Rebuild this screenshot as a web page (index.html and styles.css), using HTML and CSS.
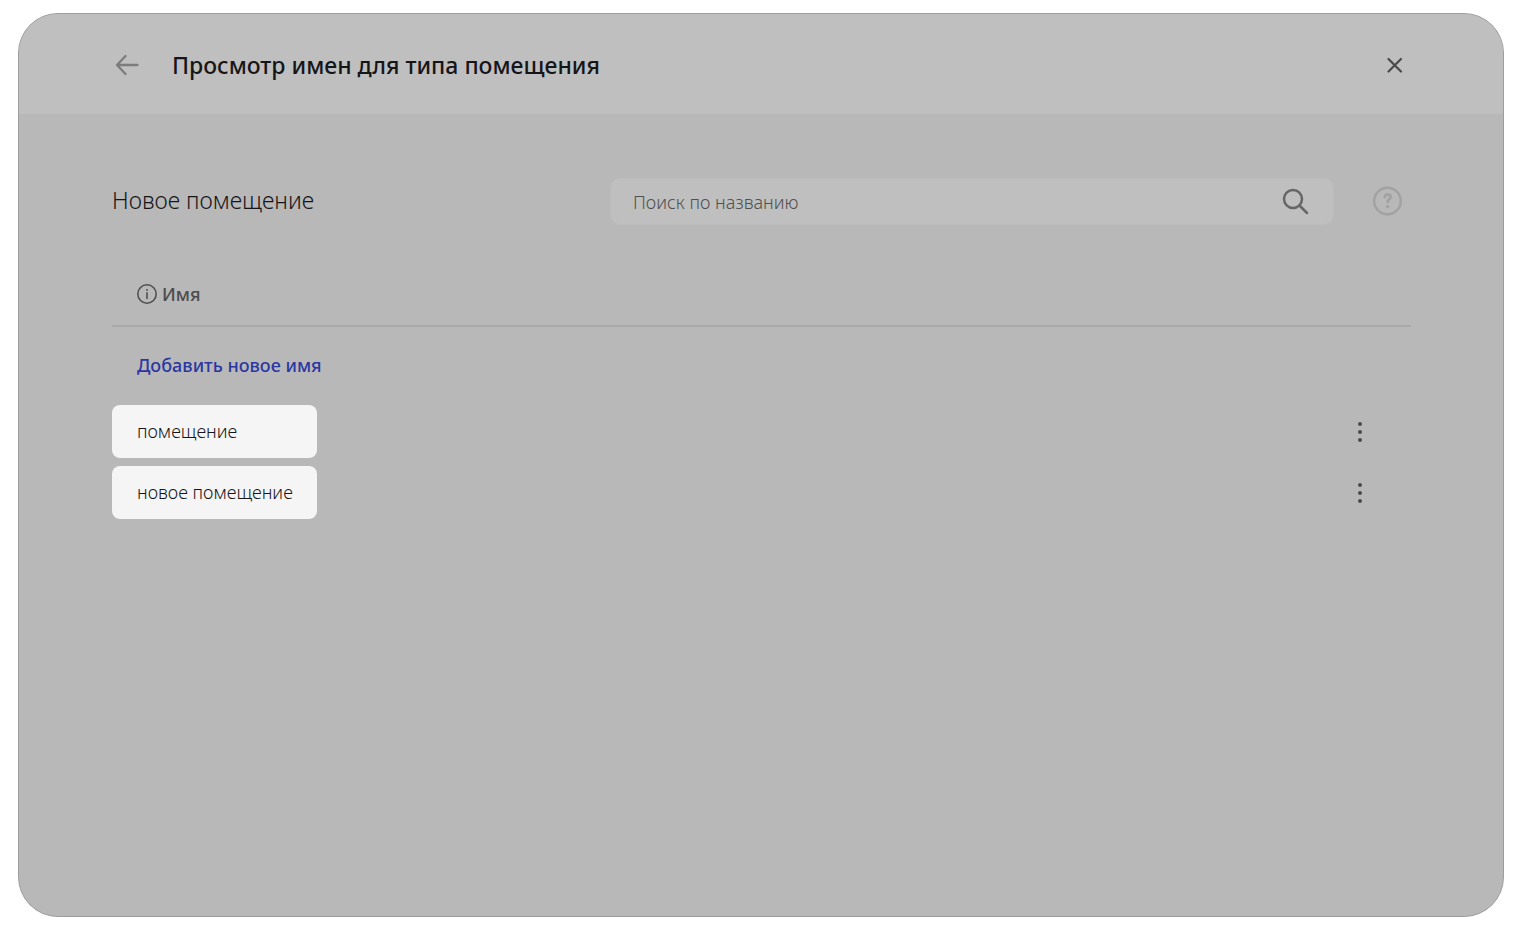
FILE: index.html
```html
<!DOCTYPE html>
<html lang="ru">
<head>
<meta charset="utf-8">
<meta name="viewport" content="width=device-width, initial-scale=1">
<title>Просмотр имен для типа помещения</title>
<link rel="stylesheet" href="styles.css">
</head>
<body>
<main class="panel">
  <header class="panel-header">
    <button class="icon-button" type="button" aria-label="Назад">
      <svg width="28" height="28" viewBox="0 0 28 28" fill="none" stroke="#7c7c7c" stroke-width="2.300" stroke-linecap="round" stroke-linejoin="round"><path d="M25.500 14H5M13.500 5L5 14l8.500 9"/></svg>
    </button>
    <h1 class="title">Просмотр имен для типа помещения</h1>
    <button class="icon-button" type="button" aria-label="Закрыть">
      <svg width="28" height="28" viewBox="0 0 28 28" fill="none" stroke="#4a4a4c" stroke-width="2.200" stroke-linecap="round"><path d="M7.500 8l12.500 12.500M20 8L7.500 20.500"/></svg>
    </button>
  </header>
  <section class="content">
    <div class="toolbar">
      <h2 class="subtitle">Новое помещение</h2>
      <form class="search">
        <input class="search-input" type="text" aria-label="Поиск по названию" placeholder="Поиск по названию">
        <button class="icon-button" type="button" aria-label="Найти">
          <svg width="28" height="28" viewBox="0 0 28 28" fill="none" stroke="#666" stroke-width="2.500" stroke-linecap="round"><circle cx="12" cy="11" r="9"/><path d="M18.500 17.500L26 25"/></svg>
        </button>
      </form>
      <button class="icon-button help" type="button" aria-label="Справка">
        <svg width="30" height="30" viewBox="0 0 30 30" fill="none" stroke="#a2a2a2" stroke-width="2.500" stroke-linecap="round" stroke-linejoin="round"><circle cx="14.500" cy="15" r="13.300"/><path stroke-width="2.800" d="M11.800 11.200c.2-1.900 1.400-2.700 2.900-2.700 1.700 0 2.900 1 2.900 2.500 0 2.400-2.900 2.300-2.900 5"/><circle cx="14.700" cy="20.600" r="1.700" fill="#a2a2a2" stroke="none"/></svg>
      </button>
    </div>
    <table class="names">
      <thead>
        <tr>
          <th class="head-cell" colspan="2" scope="col">
            <span class="head-label">
              <svg width="20" height="20" viewBox="0 0 20 20" fill="none" stroke="#505050" stroke-width="1.600"><circle cx="10" cy="10" r="9.200"/><path d="M10 8.300V15M10 5v1.800"/></svg>
              Имя
            </span>
          </th>
        </tr>
      </thead>
      <tbody>
        <tr>
          <td class="add-cell" colspan="2"><button class="add-button" type="button">Добавить новое имя</button></td>
        </tr>
        <tr>
          <td class="name-cell"><span class="name">помещение</span></td>
          <td class="menu-cell">
            <button class="icon-button" type="button" aria-label="Действия: помещение">
              <svg width="20" height="20" viewBox="0 0 20 20" fill="#4b4b4b"><circle cx="10" cy="2" r="2"/><circle cx="10" cy="10" r="2"/><circle cx="10" cy="18" r="2"/></svg>
            </button>
          </td>
        </tr>
        <tr>
          <td class="name-cell"><span class="name">новое помещение</span></td>
          <td class="menu-cell">
            <button class="icon-button" type="button" aria-label="Действия: новое помещение">
              <svg width="20" height="20" viewBox="0 0 20 20" fill="#4b4b4b"><circle cx="10" cy="2" r="2"/><circle cx="10" cy="10" r="2"/><circle cx="10" cy="18" r="2"/></svg>
            </button>
          </td>
        </tr>
      </tbody>
    </table>
  </section>
</main>
</body>
</html>
```

FILE: styles.css
```css
* {
  box-sizing: border-box;
}

body {
  display: flex;
  min-height: 100vh;
  margin: 0;
  padding: 13px 26px 10px 18px;
  background: #fff;
  color: #161618;
  font-family: "Noto Sans", "Open Sans", sans-serif;
  font-size: 18px;
  line-height: 24px;
}

.panel {
  flex: 1;
  overflow: hidden;
  border: 1px solid #9d9d9d;
  border-radius: 40px;
  background: #b8b8b8;
}

.panel-header {
  display: flex;
  align-items: center;
  height: 100px;
  padding: 2px 94px 0 93px;
  background: #bfbfbf;
}

.icon-button {
  display: flex;
  flex: none;
  padding: 0;
  border: 0;
  background: none;
  cursor: pointer;
}

.title {
  flex: 1;
  margin: 0 0 0 32px;
  font-size: 23px;
  font-weight: 500;
  line-height: 32px;
}

.content {
  padding: 64px 92px 40px 93px;
}

.toolbar {
  display: flex;
  align-items: center;
  padding-right: 8px;
}

.subtitle {
  flex: 1;
  margin: 0;
  padding-bottom: 4px;
  font-size: 23px;
  font-weight: 300;
  line-height: 32px;
}

.search {
  display: flex;
  flex: 0 1 724px;
  align-items: center;
  height: 47px;
  margin-right: 39px;
  padding: 0 24px 0 22px;
  border: 1px solid #bbb;
  border-radius: 10px;
  background: #bfbfbf;
}

.search-input {
  flex: 1;
  min-width: 0;
  padding: 0;
  border: 0;
  outline: 0;
  background: none;
  color: #1c1c1e;
  font: inherit;
  font-weight: 300;
}

.search-input::placeholder {
  color: #505050;
  opacity: 1;
}

.help {
  padding-bottom: 2px;
}

.names {
  width: 100%;
  margin-top: 37px;
  border-collapse: collapse;
}

.head-cell {
  height: 64px;
  padding: 0 25px;
  border-bottom: 2px solid #a9a9a9;
  color: #4c4c4c;
  font-weight: 500;
  text-align: left;
}

.head-label {
  display: flex;
  align-items: center;
  gap: 5px;
}

.add-cell {
  height: 75px;
  padding: 2px 25px 0;
}

.add-button {
  padding: 0;
  border: 0;
  background: none;
  color: #2b37a2;
  font: inherit;
  font-weight: 500;
  cursor: pointer;
}

.name-cell,
.menu-cell {
  height: 61px;
  padding: 0;
}

.name {
  display: block;
  width: 205px;
  padding: 14px 0 15px 25px;
  border-radius: 8px;
  background: #f5f5f5;
  color: #161618;
  font-weight: 300;
}

.menu-cell {
  width: 61px;
}
```
